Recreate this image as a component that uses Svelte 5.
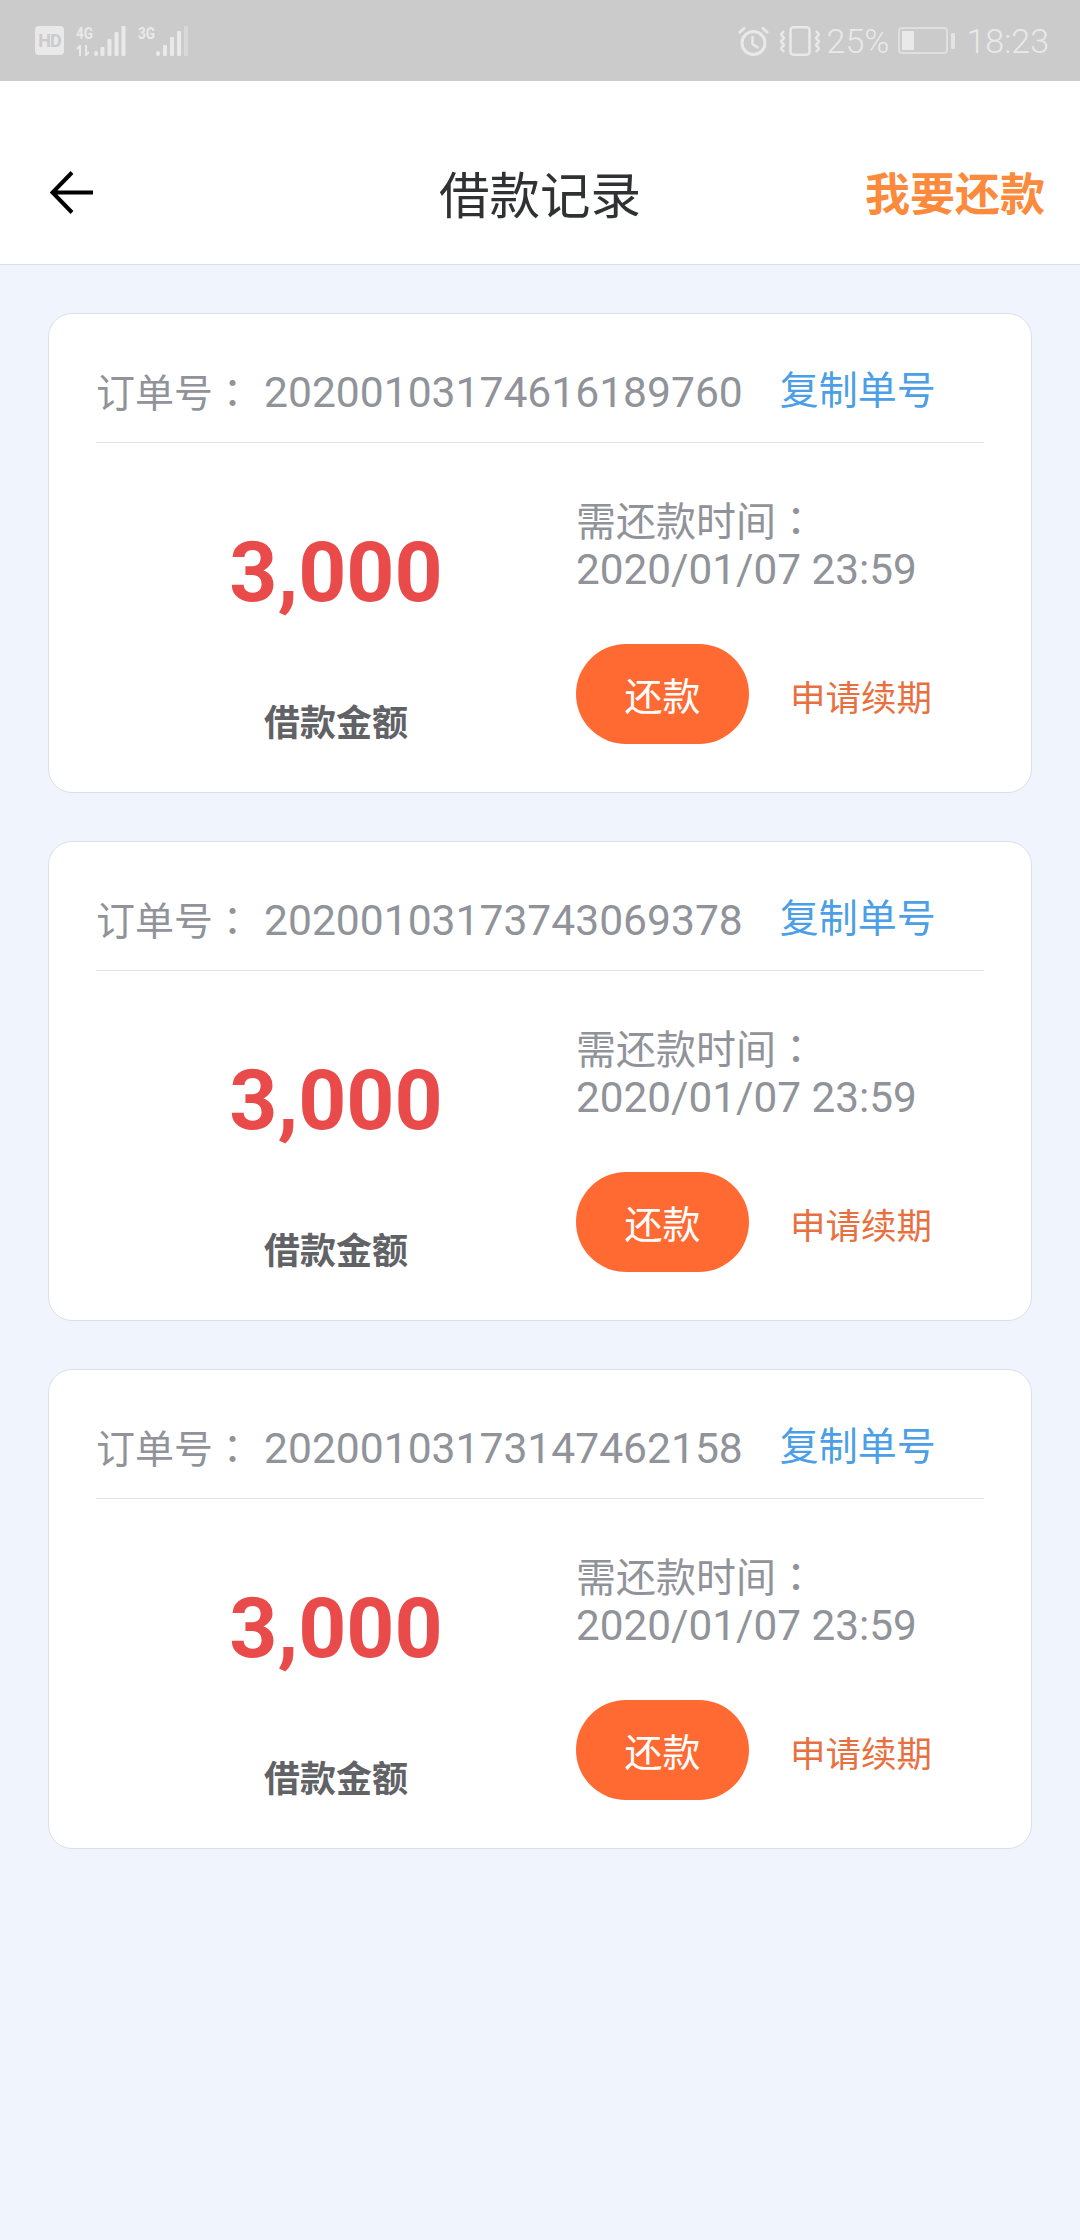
<script>
  const orders = ['20200103174616189760', '20200103173743069378', '20200103173147462158'];
</script>

<div class="page">
  <div class="status">
    <div class="status-left">
      <span class="hd">HD</span>
      <div class="net">
        <div class="net-labels">
          <span class="gen">4G</span>
          <svg class="updown" width="15" height="11" viewBox="0 0 15 11" fill="none" stroke="#e9e9e9" stroke-width="2">
            <path d="M4 11V1L1 4M10 0v10l3-3" />
          </svg>
        </div>
        <svg class="bars" width="32" height="30" viewBox="0 0 32 30" fill="#e9e9e9">
          <rect x="0" y="25" width="4" height="5" rx="2" />
          <rect x="6.5" y="21" width="4" height="9" rx="1" />
          <rect x="13.5" y="13" width="4" height="17" rx="1" />
          <rect x="20.5" y="6" width="4" height="24" rx="1" />
          <rect x="27.5" y="0" width="4" height="30" rx="1" />
        </svg>
      </div>
      <div class="net net-two">
        <div class="net-labels">
          <span class="gen">3G</span>
        </div>
        <svg class="bars" width="32" height="30" viewBox="0 0 32 30" fill="#e9e9e9">
          <rect x="0" y="25" width="4" height="5" rx="2" />
          <rect x="7" y="19" width="4" height="11" rx="1" />
          <rect x="14" y="11" width="4" height="19" rx="1" />
          <rect x="21" y="5" width="4" height="25" rx="1" />
          <rect x="28" y="0" width="4" height="30" rx="1" fill="#d8d8d8" />
        </svg>
      </div>
    </div>
    <div class="status-right">
      <svg width="31" height="30" viewBox="0 0 31 30" fill="none" stroke="#e9e9e9" stroke-width="3">
        <circle cx="15.5" cy="17" r="11.5" />
        <path d="M14.5 10v8l6 4" stroke-width="2.5" />
        <path d="M1 7l6-5.5M30 7l-6-5.5" stroke-width="2.5" />
      </svg>
      <svg class="vibrate" width="40" height="30" viewBox="0 0 40 30" fill="none" stroke="#e9e9e9" stroke-width="2.5">
        <rect x="10.5" y="1.25" width="19" height="27.5" rx="3" />
        <path d="M4 5l-3 3.5 3 3.5-3 3.5 3 3.5-3 3.5 3 3.5M36 5l3 3.5-3 3.5 3 3.5-3 3.5 3 3.5-3 3.5" stroke-width="2.5" />
      </svg>
      <span class="status-text pct">25%</span>
      <div class="battery"><span class="battery-fill"></span></div>
      <span class="battery-tip"></span>
      <span class="status-text time">18:23</span>
    </div>
  </div>

  <header class="nav">
    <svg class="back" width="43" height="43" viewBox="0 0 43 43" fill="none" stroke="#000" stroke-width="4">
      <path d="M43 21.5H3M22 1.5L2.5 21.5l19.500 20" />
    </svg>
    <h1>借款记录</h1>
    <span class="repay-link">我要还款</span>
  </header>

  <main class="list">
    {#each orders as order}
      <section class="card">
        <div class="card-head">
          <span class="order"><span class="order-label">订单号<span class="colon">：</span></span>{order}</span>
          <span class="copy">复制单号</span>
        </div>
        <div class="card-body">
          <div class="amount-col">
            <div class="amount">3,000</div>
            <div class="amount-label">借款金额</div>
          </div>
          <div class="info-col">
            <div class="due">
              <div class="due-label">需还款时间<span class="colon">：</span></div>
              <div class="due-date">2020/01/07 23:59</div>
            </div>
            <div class="actions">
              <button class="pay">还款</button>
              <span class="renew">申请续期</span>
            </div>
          </div>
        </div>
      </section>
    {/each}
  </main>
</div>

<style>
  :global(body) {
    margin: 0;
    background: #f0f4fd;
  }

  .page {
    min-height: 2240px;
    background: #f0f4fd;
    font-family: Roboto, "Noto Sans CJK SC", sans-serif;
  }

  .status {
    height: 81px;
    background: #cbcbcb;
    display: flex;
    justify-content: space-between;
    align-items: center;
    padding: 0 31px 0 35px;
    color: #e9e9e9;
  }
  .status-left, .status-right { display: flex; align-items: center; }

  .hd {
    width: 29px;
    height: 29px;
    border-radius: 4px;
    background: #e9e9e9;
    color: #cbcbcb;
    font: 700 18px/29px Roboto, sans-serif;
    text-align: center;
    letter-spacing: -1px;
    margin-right: 12px;
  }
  .net { display: flex; align-items: flex-end; height: 30px; }
  .net-two { margin-left: 12px; }
  .net-labels {
    display: flex;
    flex-direction: column;
    width: 18px;
    height: 30px;
  }
  .gen {
    font: 700 17px/14px Roboto, sans-serif;
    transform: scaleX(0.8);
    transform-origin: left;
    white-space: nowrap;
  }
  .updown { margin-top: 5px; }

  .vibrate { margin-left: 11px; }
  .status-text { font-size: 34px; font-weight: 300; line-height: 40px; }
  .pct { margin-left: 7px; }
  .battery {
    margin-left: 9px;
    width: 50px;
    height: 27px;
    box-sizing: border-box;
    border: 2px solid #dfdfdf;
    border-radius: 4px;
    padding: 2px;
    display: flex;
  }
  .battery-fill { width: 12px; background: #e9e9e9; }
  .battery-tip {
    width: 4px;
    height: 16px;
    margin-left: 3px;
    background: #e4e4e4;
    border-radius: 1px;
  }
  .time { margin-left: 11px; }

  .nav {
    height: 184px;
    box-sizing: border-box;
    padding: 39px 35px 0;
    background: #fff;
    border-bottom: 1px solid #dcdfe6;
    display: grid;
    grid-template-columns: minmax(0, 1fr) auto minmax(0, 1fr);
    align-items: center;
  }
  .back { display: block; margin-left: 15px; }
  h1 {
    margin: 0;
    font: 400 50.5px/60px "Noto Sans CJK SC", sans-serif;
    color: #303133;
  }
  .repay-link {
    justify-self: end;
    font: 700 45px/60px "Noto Sans CJK SC", sans-serif;
    color: #fb8a3c;
  }

  .list {
    padding: 48px 48px 0;
    display: flex;
    flex-direction: column;
    gap: 48px;
  }

  .card {
    height: 480px;
    box-sizing: border-box;
    padding: 0 47px;
    background: #fff;
    border: 1px solid #dcdfe6;
    border-radius: 24px;
  }
  .card-head {
    height: 129px;
    box-sizing: border-box;
    padding-top: 52px;
    border-bottom: 1px solid #dfe1e6;
    display: flex;
    line-height: 50px;
  }
  .order { font-size: 42.6px; color: #909399; white-space: nowrap; line-height: 49px; }
  .order-label { font-size: 39px; margin-right: 12px; }
  .colon { font-family: "Noto Sans CJK TC", sans-serif; }
  .copy { margin-left: 37px; font-size: 39px; color: #4c9fe6; white-space: nowrap; }

  .card-body { display: flex; }
  .amount-col {
    width: 480px;
    text-align: center;
    padding-top: 80px;
    box-sizing: border-box;
  }
  .amount {
    font-size: 84px;
    font-weight: 700;
    line-height: 100px;
    color: #e94b4b;
  }
  .amount-label {
    margin-top: 72px;
    font: 700 36px/50px "Noto Sans CJK SC", sans-serif;
    color: #606266;
  }
  .info-col { padding-top: 52px; }
  .due { font-size: 40px; line-height: 49px; color: #909399; white-space: nowrap; }
  .due-date { font-size: 42.3px; margin-top: -2px; }
  .actions { display: flex; align-items: center; margin-top: 50px; }
  .pay {
    width: 173px;
    height: 100px;
    border: none;
    padding: 0;
    border-radius: 50px;
    background: #ff6a32;
    color: #fff;
    font: 400 38px/100px "Noto Sans CJK SC", sans-serif;
  }
  .renew { margin-left: 41px; margin-top: 2px; font-size: 35.500px; color: #e8703f; white-space: nowrap; }
</style>
